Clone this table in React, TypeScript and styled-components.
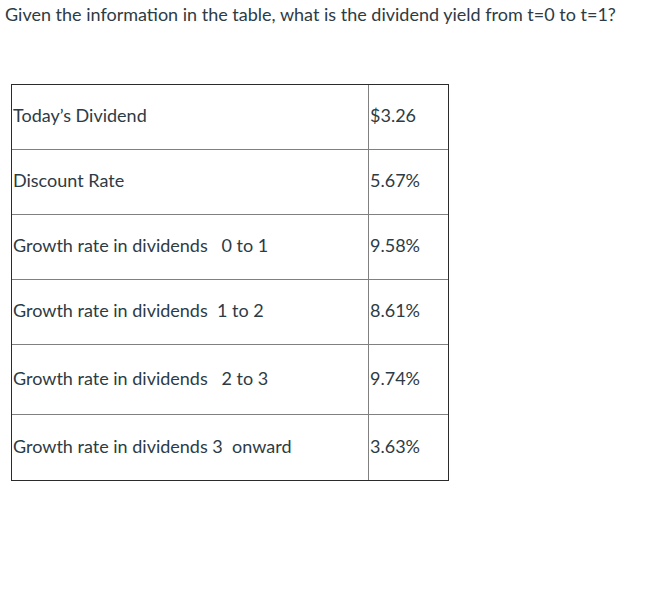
import React from 'react';
import styled, { createGlobalStyle } from 'styled-components';

const GlobalStyle = createGlobalStyle`
    body {
        margin: 0;
        background: #ffffff;
        font-family: Lato, "Open Sans", sans-serif;
        color: #2d3b45;
    }
`;

const Page = styled.div`
    width: 651px;
    height: 596px;
    padding: 0 0 0 5px;
    box-sizing: border-box;
`;

const Question = styled.p`
    margin: 0;
    padding-top: 3px;
    font-size: 18px;
    line-height: 22px;
    white-space: pre;
`;

const Table = styled.div`
    margin: 59px 0 0 6px;
    width: 436px;
    border: 1px solid #2b2b2b;
    display: grid;
    grid-template-columns: 357px 79px;
`;

const Cell = styled.div<{ $h: number; $last?: boolean; $first?: boolean }>`
    height: ${(p) => p.$h}px;
    box-sizing: border-box;
    border-bottom: ${(p) => (p.$last ? 'none' : '1px solid #808080')};
    border-right: ${(p) => (p.$first ? '1px solid #808080' : 'none')};
    display: flex;
    align-items: center;
    padding: 0 0 4px 1px;
    font-size: 18px;
    line-height: 22px;
    white-space: pre;
`;

const rows = [
    { label: 'Today\u2019s Dividend', value: '$3.26', h: 65 },
    { label: 'Discount Rate', value: '5.67%', h: 65 },
    { label: 'Growth rate in dividends   0 to 1', value: '9.58%', h: 65 },
    { label: 'Growth rate in dividends  1 to 2', value: '8.61%', h: 65 },
    { label: 'Growth rate in dividends   2 to 3', value: '9.74%', h: 70 },
    { label: 'Growth rate in dividends 3  onward', value: '3.63%', h: 65 },
];

const App = () => {
    return (
        <Page>
            <GlobalStyle />
            <Question>Given the information in the table, what is the dividend yield from t=0 to t=1?</Question>
            <Table>
                {rows.map((r, i) => (
                    <React.Fragment key={i}>
                        <Cell $h={r.h} $first $last={i === rows.length - 1}>{r.label}</Cell>
                        <Cell $h={r.h} $last={i === rows.length - 1}>{r.value}</Cell>
                    </React.Fragment>
                ))}
            </Table>
        </Page>
    );
};
export default App;
